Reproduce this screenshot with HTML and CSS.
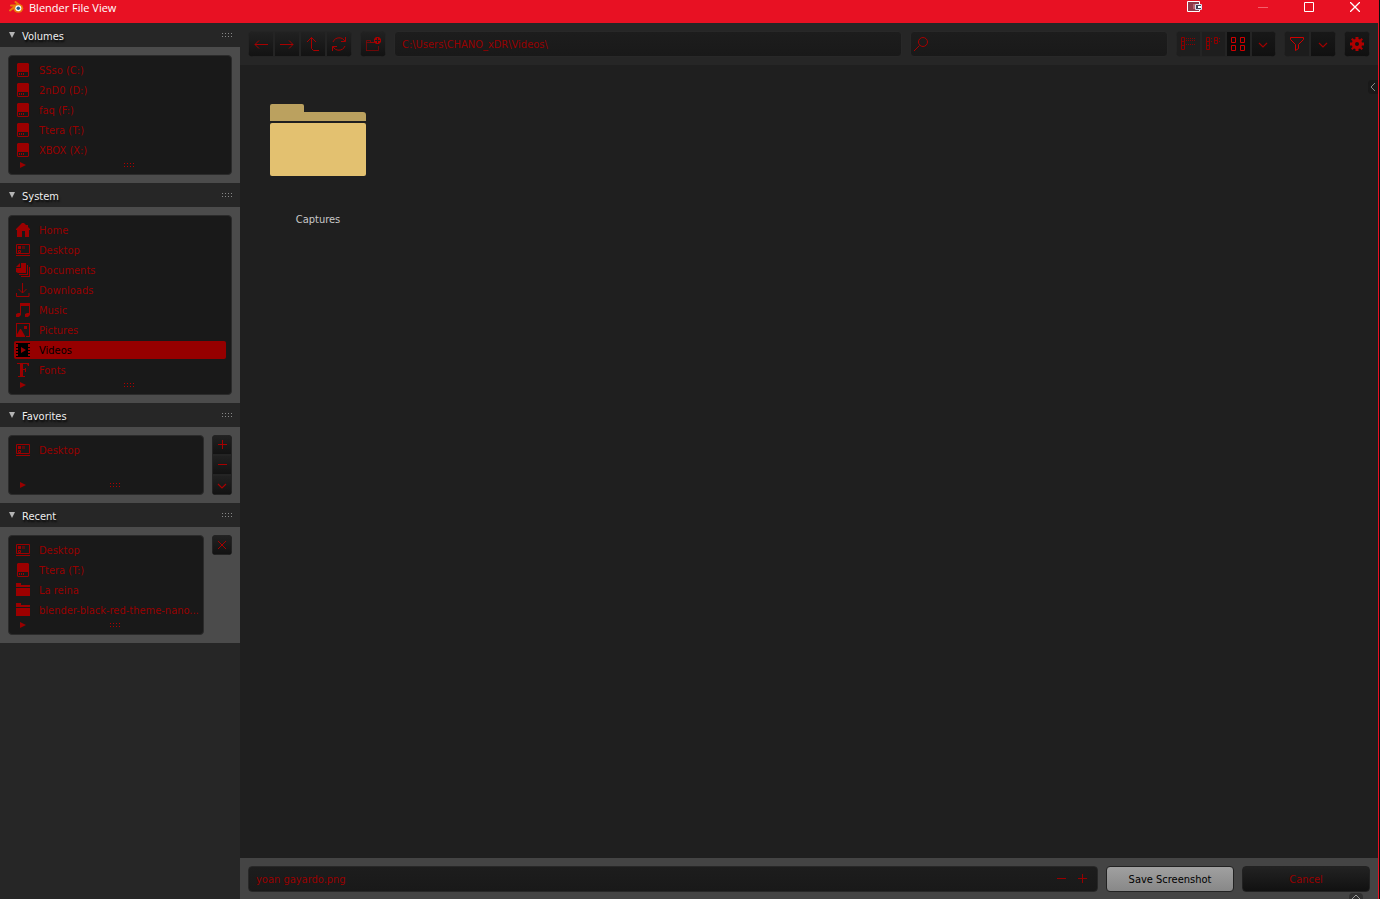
FILE: index.html
```
<!DOCTYPE html>
<html lang="en">
<head>
  <meta charset="UTF-8">
  <title>Blender File View</title>
  <link rel="stylesheet" href="styles.css">
</head>
<body>
  <!-- icon set -->
  <svg class="sprite" aria-hidden="true">
    <symbol id="i-disk" viewBox="0 0 14 14">
      <path fill="currentColor" fill-rule="evenodd" d="M2 0h10l1 1v12l-1 1H2l-1-1V1zM2 9v4h10V9z"/>
      <path fill="currentColor" d="M3 10h1v2H3zM5 10h1v2H5zM7 10h1v2H7z"/>
    </symbol>
    <symbol id="i-home" viewBox="0 0 14 14">
      <path fill="currentColor" d="M6 0h2l2 2h2v2l2 2v1h-1v7H9V8H6v6H1V7H0V6z"/>
    </symbol>
    <symbol id="i-desktop" viewBox="0 0 14 14">
      <path fill="none" stroke="currentColor" d="M.5 1.500h13v9H.5zM0 12.500h14M2.500 7.500h2v2h-2z"/>
      <path fill="currentColor" d="M2 3h3v3H2z"/>
      <path fill="currentColor" opacity=".5" d="M6 3h3v3H6z"/>
    </symbol>
    <symbol id="i-docs" viewBox="0 0 14 14">
      <path fill="currentColor" d="M4 0v4H0zM5 0h5v10H2L0 9V5h5zM11 2h1v10H3v-1h8zM13 4h1v10H5v-1h8z"/>
    </symbol>
    <symbol id="i-down" viewBox="0 0 14 14">
      <path fill="none" stroke="currentColor" d="M6.500 0v10M2.500 6l4 4 4-4M.5 10v3.500h12.500V10"/>
    </symbol>
    <symbol id="i-music" viewBox="0 0 14 14">
      <path fill="currentColor" d="M4 0h10v12l-2 2H9v-3l2-1h2V3H5v9l-2 2H0v-3l2-1h2z"/>
    </symbol>
    <symbol id="i-pics" viewBox="0 0 14 14">
      <path fill="currentColor" d="M0 0h14v14h-4v-1h3V1H1v12H0zM8 3h3v3H8zM4 6h1l4 7v1H0v-1z"/>
    </symbol>
    <symbol id="i-video" viewBox="0 0 14 14">
      <path fill="currentColor" fill-rule="evenodd" d="M0 0h14v14H0zM0 1v3h2V1zM0 5v2h2V5zM0 8v2h2V8zM0 11v2h2v-2zM12 1v3h2V1zM12 5v2h2V5zM12 8v2h2V8zM12 11v2h2v-2zM5 4v6l5-3z"/>
    </symbol>
    <symbol id="i-font" viewBox="0 0 14 14">
      <path fill="currentColor" d="M1 0h12v3h-1l-1-2H7v5h2V5h1v4H9V7H7v6h2v1H2v-1h2V1H1z"/>
    </symbol>
    <symbol id="i-folder" viewBox="0 0 14 14">
      <path fill="currentColor" d="M0 0h5v2h9v2H0zM0 5h14v8H0z"/>
    </symbol>
    <symbol id="i-left" viewBox="0 0 14 14">
      <path fill="none" stroke="currentColor" d="M14 7.500H1M5 3.500l-4 4 4 4"/>
    </symbol>
    <symbol id="i-right" viewBox="0 0 14 14">
      <path fill="none" stroke="currentColor" d="M0 7.500h13M9 3.500l4 4-4 4"/>
    </symbol>
    <symbol id="i-up" viewBox="0 0 14 14">
      <path fill="none" stroke="currentColor" d="M1 5l4.500-4.500L10 5M5.500.5v11l2 2H13"/>
    </symbol>
    <symbol id="i-refresh" viewBox="0 0 14 14">
      <path fill="none" stroke="currentColor" d="M13.500 0v4.500H9M13 4.500C11-.5 3-.5 1 5M.5 14V9.500H5M1 9.500c2 5 10 5 12-.5"/>
    </symbol>
    <symbol id="i-newfolder" viewBox="0 0 16 16">
      <path fill="none" stroke="currentColor" opacity=".6" d="M1.500 15V4.500h4v2H9M1.500 6.500h9M1.500 14.500h12V10"/>
      <path fill="currentColor" fill-rule="evenodd" d="M11 1h3l2 2v3l-2 2h-3L9 6V3zM12 2v2h-2v1h2v2h1V5h2V4h-2V2z"/>
    </symbol>
    <symbol id="i-search" viewBox="0 0 14 14">
      <circle cx="9" cy="5" r="4.500" fill="none" stroke="currentColor"/>
      <path stroke="currentColor" d="M0 14l5.500-5.500"/>
    </symbol>
    <symbol id="i-vlist" viewBox="0 0 16 16">
      <path fill="none" stroke="currentColor" d="M1.500 1.500h3v12h-3zM1 5.500h4M1 9.500h4"/>
      <path stroke="currentColor" stroke-dasharray="1 1" d="M6 2.500h9M6 4.500h9M6 8.500h9"/>
    </symbol>
    <symbol id="i-hlist" viewBox="0 0 16 16">
      <path fill="none" stroke="currentColor" d="M1.500 1.500h3v12h-3zM1 5.500h4M1 9.500h4M9.500 1.500h3v6h-3zM9 4.500h4"/>
      <path stroke="currentColor" stroke-dasharray="1 1" d="M6 2.500h2M6 5.500h2M14 2.500h2M14 5.500h2"/>
    </symbol>
    <symbol id="i-grid" viewBox="0 0 14 14">
      <path fill="none" stroke="currentColor" d="M.5.500h4v5h-4zM9.500.500h4v5h-4zM.5 8.500h4v5h-4zM9.500 8.500h4v5h-4z"/>
    </symbol>
    <symbol id="i-chev" viewBox="0 0 14 14">
      <path fill="none" stroke="currentColor" stroke-width="1.200" d="M3 6l4 4 4-4"/>
    </symbol>
    <symbol id="i-filter" viewBox="0 0 14 14">
      <path fill="none" stroke="currentColor" d="M.5.500h13v2l-5 5v4L5.500 13.500v-6l-5-5z"/>
    </symbol>
    <symbol id="i-gear" viewBox="0 0 14 14">
      <path fill="currentColor" fill-rule="evenodd" d="M5.500 0h3v2l1.500.5L11.500 1 13 2.500 11.500 4l.5 1.500h2v3h-2l-.5 1.500 1.500 1.500-1.500 1.500L10 11.500l-1.500.5v2h-3v-2L4 11.500 2.500 13 1 11.500 2.500 10 2 8.500H0v-3h2L2.500 4 1 2.500 2.500 1 4 2.500 5.500 2zM7 5a2 2 0 1 0 0 4 2 2 0 0 0 0-4z"/>
    </symbol>
    <symbol id="i-plus" viewBox="0 0 14 14">
      <path stroke="currentColor" d="M3 6.500h9M7.500 2v9"/>
    </symbol>
    <symbol id="i-minus" viewBox="0 0 14 14">
      <path stroke="currentColor" d="M3 6.500h9"/>
    </symbol>
    <symbol id="i-x" viewBox="0 0 14 14">
      <path stroke="currentColor" d="M3 3l8 8M11 3l-8 8"/>
    </symbol>
    <symbol id="i-grip" viewBox="0 0 11 4">
      <path fill="currentColor" d="M0 0h1v1H0zM3 0h1v1H3zM6 0h1v1H6zM9 0h1v1H9zM0 3h1v1H0zM3 3h1v1H3zM6 3h1v1H6zM9 3h1v1H9z"/>
    </symbol>
    <symbol id="i-tri" viewBox="0 0 6 6">
      <path fill="currentColor" d="M0 0l6 3-6 3z"/>
    </symbol>
  </svg>

  <div class="window">
    <header class="titlebar">
      <svg class="logo" viewBox="0 0 15 12">
        <path fill="none" stroke="#e87d0d" stroke-width="2" stroke-linecap="round" d="M6.500 1l5 4M2 4.500h7M1 9.500l5-4"/>
        <ellipse cx="9.300" cy="7.300" rx="4.900" ry="4.400" fill="#e87d0d"/>
        <circle cx="9.300" cy="7.300" r="3" fill="#fff"/>
        <circle cx="9.300" cy="7.300" r="1.800" fill="#265787"/>
      </svg>
      <h1>Blender File View</h1>
      <button class="win-btn snap" aria-label="Capture window">
        <svg width="16" height="12" viewBox="0 0 16 12">
          <path fill="#8d3848" stroke="#fff" d="M.5.500h12v10H.5z"/>
          <path fill="#b9656f" d="M6 3h2v5H6z"/>
          <path fill="#445" stroke="#dde" d="M8.500 3.500h6v5h-6z"/>
          <path fill="#fff" d="M11 5h3v2h-3z"/>
        </svg>
      </button>
      <button class="win-btn dim" aria-label="Minimize">
        <svg width="10" height="10"><path stroke="currentColor" d="M0 5.500h10"/></svg>
      </button>
      <button class="win-btn" aria-label="Maximize">
        <svg width="10" height="10"><path fill="none" stroke="currentColor" d="M.5.500h9v9h-9z"/></svg>
      </button>
      <button class="win-btn" aria-label="Close">
        <svg width="10" height="10"><path stroke="currentColor" stroke-width="1.300" d="M0 0l10 10M10 0L0 10"/></svg>
      </button>
    </header>

    <div class="content">
      <aside class="sidebar">
        <section class="panel">
          <h2><span class="fold"></span>Volumes<svg class="grip"><use href="#i-grip"/></svg></h2>
          <div class="panel-body">
            <div class="list">
              <ul>
                <li><a href="#"><svg class="icon"><use href="#i-disk"/></svg><span>SSso (C:)</span></a></li>
                <li><a href="#"><svg class="icon"><use href="#i-disk"/></svg><span>2nD0 (D:)</span></a></li>
                <li><a href="#"><svg class="icon"><use href="#i-disk"/></svg><span>faq (F:)</span></a></li>
                <li><a href="#"><svg class="icon"><use href="#i-disk"/></svg><span>Ttera (T:)</span></a></li>
                <li><a href="#"><svg class="icon"><use href="#i-disk"/></svg><span>XBOX (X:)</span></a></li>
              </ul>
              <div class="list-foot"><svg class="tri"><use href="#i-tri"/></svg><svg class="grip"><use href="#i-grip"/></svg></div>
            </div>
          </div>
        </section>

        <section class="panel">
          <h2><span class="fold"></span>System<svg class="grip"><use href="#i-grip"/></svg></h2>
          <div class="panel-body">
            <div class="list">
              <ul>
                <li><a href="#"><svg class="icon"><use href="#i-home"/></svg><span>Home</span></a></li>
                <li><a href="#"><svg class="icon"><use href="#i-desktop"/></svg><span>Desktop</span></a></li>
                <li><a href="#"><svg class="icon"><use href="#i-docs"/></svg><span>Documents</span></a></li>
                <li><a href="#"><svg class="icon"><use href="#i-down"/></svg><span>Downloads</span></a></li>
                <li><a href="#"><svg class="icon"><use href="#i-music"/></svg><span>Music</span></a></li>
                <li><a href="#"><svg class="icon"><use href="#i-pics"/></svg><span>Pictures</span></a></li>
                <li><a href="#" class="active"><svg class="icon"><use href="#i-video"/></svg><span>Videos</span></a></li>
                <li><a href="#"><svg class="icon"><use href="#i-font"/></svg><span>Fonts</span></a></li>
              </ul>
              <div class="list-foot"><svg class="tri"><use href="#i-tri"/></svg><svg class="grip"><use href="#i-grip"/></svg></div>
            </div>
          </div>
        </section>

        <section class="panel">
          <h2><span class="fold"></span>Favorites<svg class="grip"><use href="#i-grip"/></svg></h2>
          <div class="panel-body">
            <div class="list">
              <ul class="two-rows">
                <li><a href="#"><svg class="icon"><use href="#i-desktop"/></svg><span>Desktop</span></a></li>
              </ul>
              <div class="list-foot"><svg class="tri"><use href="#i-tri"/></svg><svg class="grip"><use href="#i-grip"/></svg></div>
            </div>
            <div class="side-btns">
              <button class="btn" aria-label="Add"><svg class="icon"><use href="#i-plus"/></svg></button>
              <button class="btn" aria-label="Remove"><svg class="icon"><use href="#i-minus"/></svg></button>
              <button class="btn" aria-label="More"><svg class="icon"><use href="#i-chev"/></svg></button>
            </div>
          </div>
        </section>

        <section class="panel">
          <h2><span class="fold"></span>Recent<svg class="grip"><use href="#i-grip"/></svg></h2>
          <div class="panel-body">
            <div class="list">
              <ul>
                <li><a href="#"><svg class="icon"><use href="#i-desktop"/></svg><span>Desktop</span></a></li>
                <li><a href="#"><svg class="icon"><use href="#i-disk"/></svg><span>Ttera (T:)</span></a></li>
                <li><a href="#"><svg class="icon"><use href="#i-folder"/></svg><span>La reina</span></a></li>
                <li><a href="#"><svg class="icon"><use href="#i-folder"/></svg><span>blender-black-red-theme-nano...</span></a></li>
              </ul>
              <div class="list-foot"><svg class="tri"><use href="#i-tri"/></svg><svg class="grip"><use href="#i-grip"/></svg></div>
            </div>
            <div class="side-btns">
              <button class="btn" aria-label="Clear recent"><svg class="icon"><use href="#i-x"/></svg></button>
            </div>
          </div>
        </section>
      </aside>

      <main class="browser">
        <div class="toolbar">
          <div class="group">
            <button class="btn" aria-label="Back"><svg class="icon"><use href="#i-left"/></svg></button>
            <button class="btn" aria-label="Forward"><svg class="icon"><use href="#i-right"/></svg></button>
            <button class="btn" aria-label="Parent directory"><svg class="icon"><use href="#i-up"/></svg></button>
            <button class="btn" aria-label="Refresh"><svg class="icon"><use href="#i-refresh"/></svg></button>
          </div>
          <div class="group">
            <button class="btn" aria-label="New folder"><svg class="icon wide"><use href="#i-newfolder"/></svg></button>
          </div>
          <input class="field path" type="text" aria-label="Path" value="C:\Users\CHANO_xDR\Videos\">
          <label class="field search">
            <svg class="icon"><use href="#i-search"/></svg>
            <input type="text" aria-label="Search">
          </label>
          <div class="group display">
            <button class="btn light" aria-label="Vertical list"><svg class="icon wide"><use href="#i-vlist"/></svg></button>
            <button class="btn light" aria-label="Horizontal list"><svg class="icon wide"><use href="#i-hlist"/></svg></button>
            <button class="btn on" aria-label="Thumbnails"><svg class="icon"><use href="#i-grid"/></svg></button>
            <button class="btn dark" aria-label="Display settings"><svg class="icon"><use href="#i-chev"/></svg></button>
          </div>
          <div class="group">
            <button class="btn lit" aria-label="Filter"><svg class="icon"><use href="#i-filter"/></svg></button>
            <button class="btn dark" aria-label="Filter settings"><svg class="icon"><use href="#i-chev"/></svg></button>
          </div>
          <div class="group">
            <button class="btn dark gear" aria-label="Options"><svg class="icon"><use href="#i-gear"/></svg></button>
          </div>
        </div>

        <div class="files">
          <a href="#" class="file">
            <svg width="96" height="72" viewBox="0 0 96 72">
              <path fill="#bba15f" d="M2 0h30a2 2 0 0 1 2 2v6h59a3 3 0 0 1 3 3v6H0V2a2 2 0 0 1 2-2z"/>
              <rect y="19" width="96" height="53" rx="2" fill="#e3c170"/>
            </svg>
            <span>Captures</span>
          </a>
          <span class="tab-right"><svg width="6" height="8"><path fill="none" stroke="currentColor" d="M5 0L1 4l4 4"/></svg></span>
        </div>

        <footer class="footer">
          <div class="field name">
            <input type="text" aria-label="File name" value="yoan gayardo.png">
            <button aria-label="Decrement"><svg class="icon"><use href="#i-minus"/></svg></button>
            <button aria-label="Increment"><svg class="icon"><use href="#i-plus"/></svg></button>
          </div>
          <button class="action save">Save Screenshot</button>
          <button class="action cancel">Cancel</button>
          <span class="tab-bottom"><svg width="8" height="5"><path fill="none" stroke="currentColor" d="M0 5l4-4 4 4"/></svg></span>
        </footer>
      </main>
    </div>
  </div>
</body>
</html>
```
FILE: styles.css
```
* {
  box-sizing: border-box;
}
body {
  margin: 0;
  padding-right: 1px;
  background: #0c0c0c;
  font-family: "DejaVu Sans Condensed", "DejaVu Sans", Verdana, sans-serif;
  font-size: 11px;
  color: #980000;
}
button, input {
  margin: 0;
  padding: 0;
  border: 0;
  background: none;
  color: inherit;
  font: inherit;
}
input {
  min-width: 0;
  outline: none;
}
a {
  color: inherit;
  text-decoration: none;
}
svg {
  display: block;
  flex: none;
}
.sprite {
  display: none;
}
.icon {
  width: 14px;
  height: 14px;
}
.icon.wide {
  width: 16px;
  height: 16px;
}
.grip {
  width: 11px;
  height: 4px;
}
.window {
  display: flex;
  flex-direction: column;
  height: 100vh;
  border-right: 1px solid #e81123;
  overflow: hidden;
}

/* title bar */
.titlebar {
  display: flex;
  flex: none;
  height: 23px;
  padding-left: 9px;
  background: #e81123;
  color: #fff;
}
.logo {
  width: 15px;
  height: 12px;
  margin-top: 1px;
}
.titlebar h1 {
  flex: 1;
  margin: 0 0 0 5px;
  font: 11px/16px "Open Sans", "Noto Sans", sans-serif;
}
.win-btn {
  display: flex;
  justify-content: center;
  align-items: center;
  width: 46px;
  height: 14px;
}
.win-btn.snap {
  margin-right: 22px;
}
.win-btn.dim {
  color: #f4606c;
}

.content {
  display: flex;
  flex: 1;
  min-height: 0;
}

/* sidebar */
.sidebar {
  flex: none;
  width: 240px;
  background: #262626;
}
.panel h2 {
  display: flex;
  align-items: center;
  height: 24px;
  margin: 0;
  padding: 2px 7px 0 9px;
  font-size: 11px;
  font-weight: normal;
  color: #eee;
  text-shadow: 1px 2px 2px #000;
}
.panel h2 .grip {
  margin: 0 0 2px auto;
  color: #888;
}
.fold {
  margin: 0 7px 2px 0;
  border: 3px solid transparent;
  border-top: 6px solid #b4b4b4;
  border-bottom: 0;
}
.panel-body {
  display: flex;
  align-items: flex-start;
  gap: 8px;
  padding: 8px;
  background: #4b4b4b;
}
.list {
  flex: 1;
  min-width: 0;
  padding: 4px 5px 0;
  background: #191919;
  border: 1px solid #2b2b2b;
  border-radius: 4px;
}
.list ul {
  margin: 0;
  padding: 0;
  list-style: none;
}
.list ul.two-rows {
  min-height: 40px;
}
.list li {
  height: 20px;
  padding: 1px 0;
}
.list a {
  display: flex;
  align-items: center;
  gap: 9px;
  height: 18px;
  padding-left: 2px;
  border-radius: 2px;
  white-space: nowrap;
}
.list .icon {
  color: #9c0000;
}
.list a.active, .list a.active .icon {
  color: #000;
}
.list a.active {
  background: #960000;
}
.list-foot {
  display: flex;
  height: 14px;
  padding: 2px 0 0 6px;
}
.list-foot .grip {
  margin: 1px auto 0;
  color: #b00000;
}
.tri {
  width: 6px;
  height: 6px;
  margin-right: 6px;
}
.side-btns {
  display: flex;
  flex-direction: column;
  width: 20px;
  border-radius: 4px;
  overflow: hidden;
}
.side-btns .btn {
  height: 20px;
}

/* buttons and fields */
.btn {
  display: flex;
  justify-content: center;
  align-items: center;
  background: linear-gradient(#222, #121212);
  box-shadow: inset 0 0 0 1px #242424;
  color: #a80000;
}
.group {
  display: flex;
  flex: none;
  border-radius: 5px;
  overflow: hidden;
}
.group .btn {
  width: 26px;
  height: 26px;
}
.group.display .btn {
  width: 25px;
  padding-right: 1px;
}
.group .light {
  background: #1e1e1e;
  color: #8c0000;
}
.group .on {
  background: #0d0d0d;
  color: #d00000;
}
.group .lit {
  background: #1c1c1c;
  color: #d00000;
}
.group .dark {
  background: linear-gradient(#181818, #101010);
  color: #a00000;
}
.group .gear {
  color: #b00000;
}
.field {
  height: 26px;
  background: linear-gradient(#1d1d1d, #191919);
  border: 1px solid #282828;
  border-radius: 4px;
}

/* file browser */
.browser {
  display: flex;
  flex: 1;
  flex-direction: column;
  min-width: 0;
}
.toolbar {
  display: flex;
  gap: 8px;
  height: 42px;
  padding: 8px;
  background: #262626;
}
.path {
  flex: 2 1 0;
  text-indent: 7px;
}
.search {
  display: flex;
  flex: 1 1 0;
  align-items: center;
  gap: 5px;
  padding-left: 3px;
}
.search .icon {
  color: #a80000;
}
.search input {
  flex: 1;
}
.files {
  position: relative;
  flex: 1;
  padding: 39px 30px;
  background: #1f1f1f;
}
.file {
  display: flex;
  flex-direction: column;
  align-items: center;
  gap: 37px;
  width: 96px;
  color: #c8c8c8;
}
.tab-right {
  position: absolute;
  top: 15px;
  right: 0;
  padding: 3px 2px;
  background: #191919;
  border-radius: 4px 0 0 4px;
  color: #888;
}
.footer {
  position: relative;
  display: flex;
  gap: 8px;
  height: 41px;
  padding: 8px;
  background: #444;
}
.name {
  display: flex;
  flex: 1;
  align-items: center;
  gap: 7px;
  padding: 0 8px 0 7px;
}
.name input {
  flex: 1;
}
.action {
  width: 128px;
  height: 26px;
  border: 1px solid #222;
  border-radius: 4px;
}
.save {
  background: linear-gradient(#a0a0a0, #888);
  color: #000;
}
.cancel {
  background: linear-gradient(#222, #111);
}
.tab-bottom {
  position: absolute;
  right: 15px;
  bottom: 0;
  padding: 1px 3px 0;
  background: #303030;
  border-radius: 4px 4px 0 0;
  color: #999;
}
```
